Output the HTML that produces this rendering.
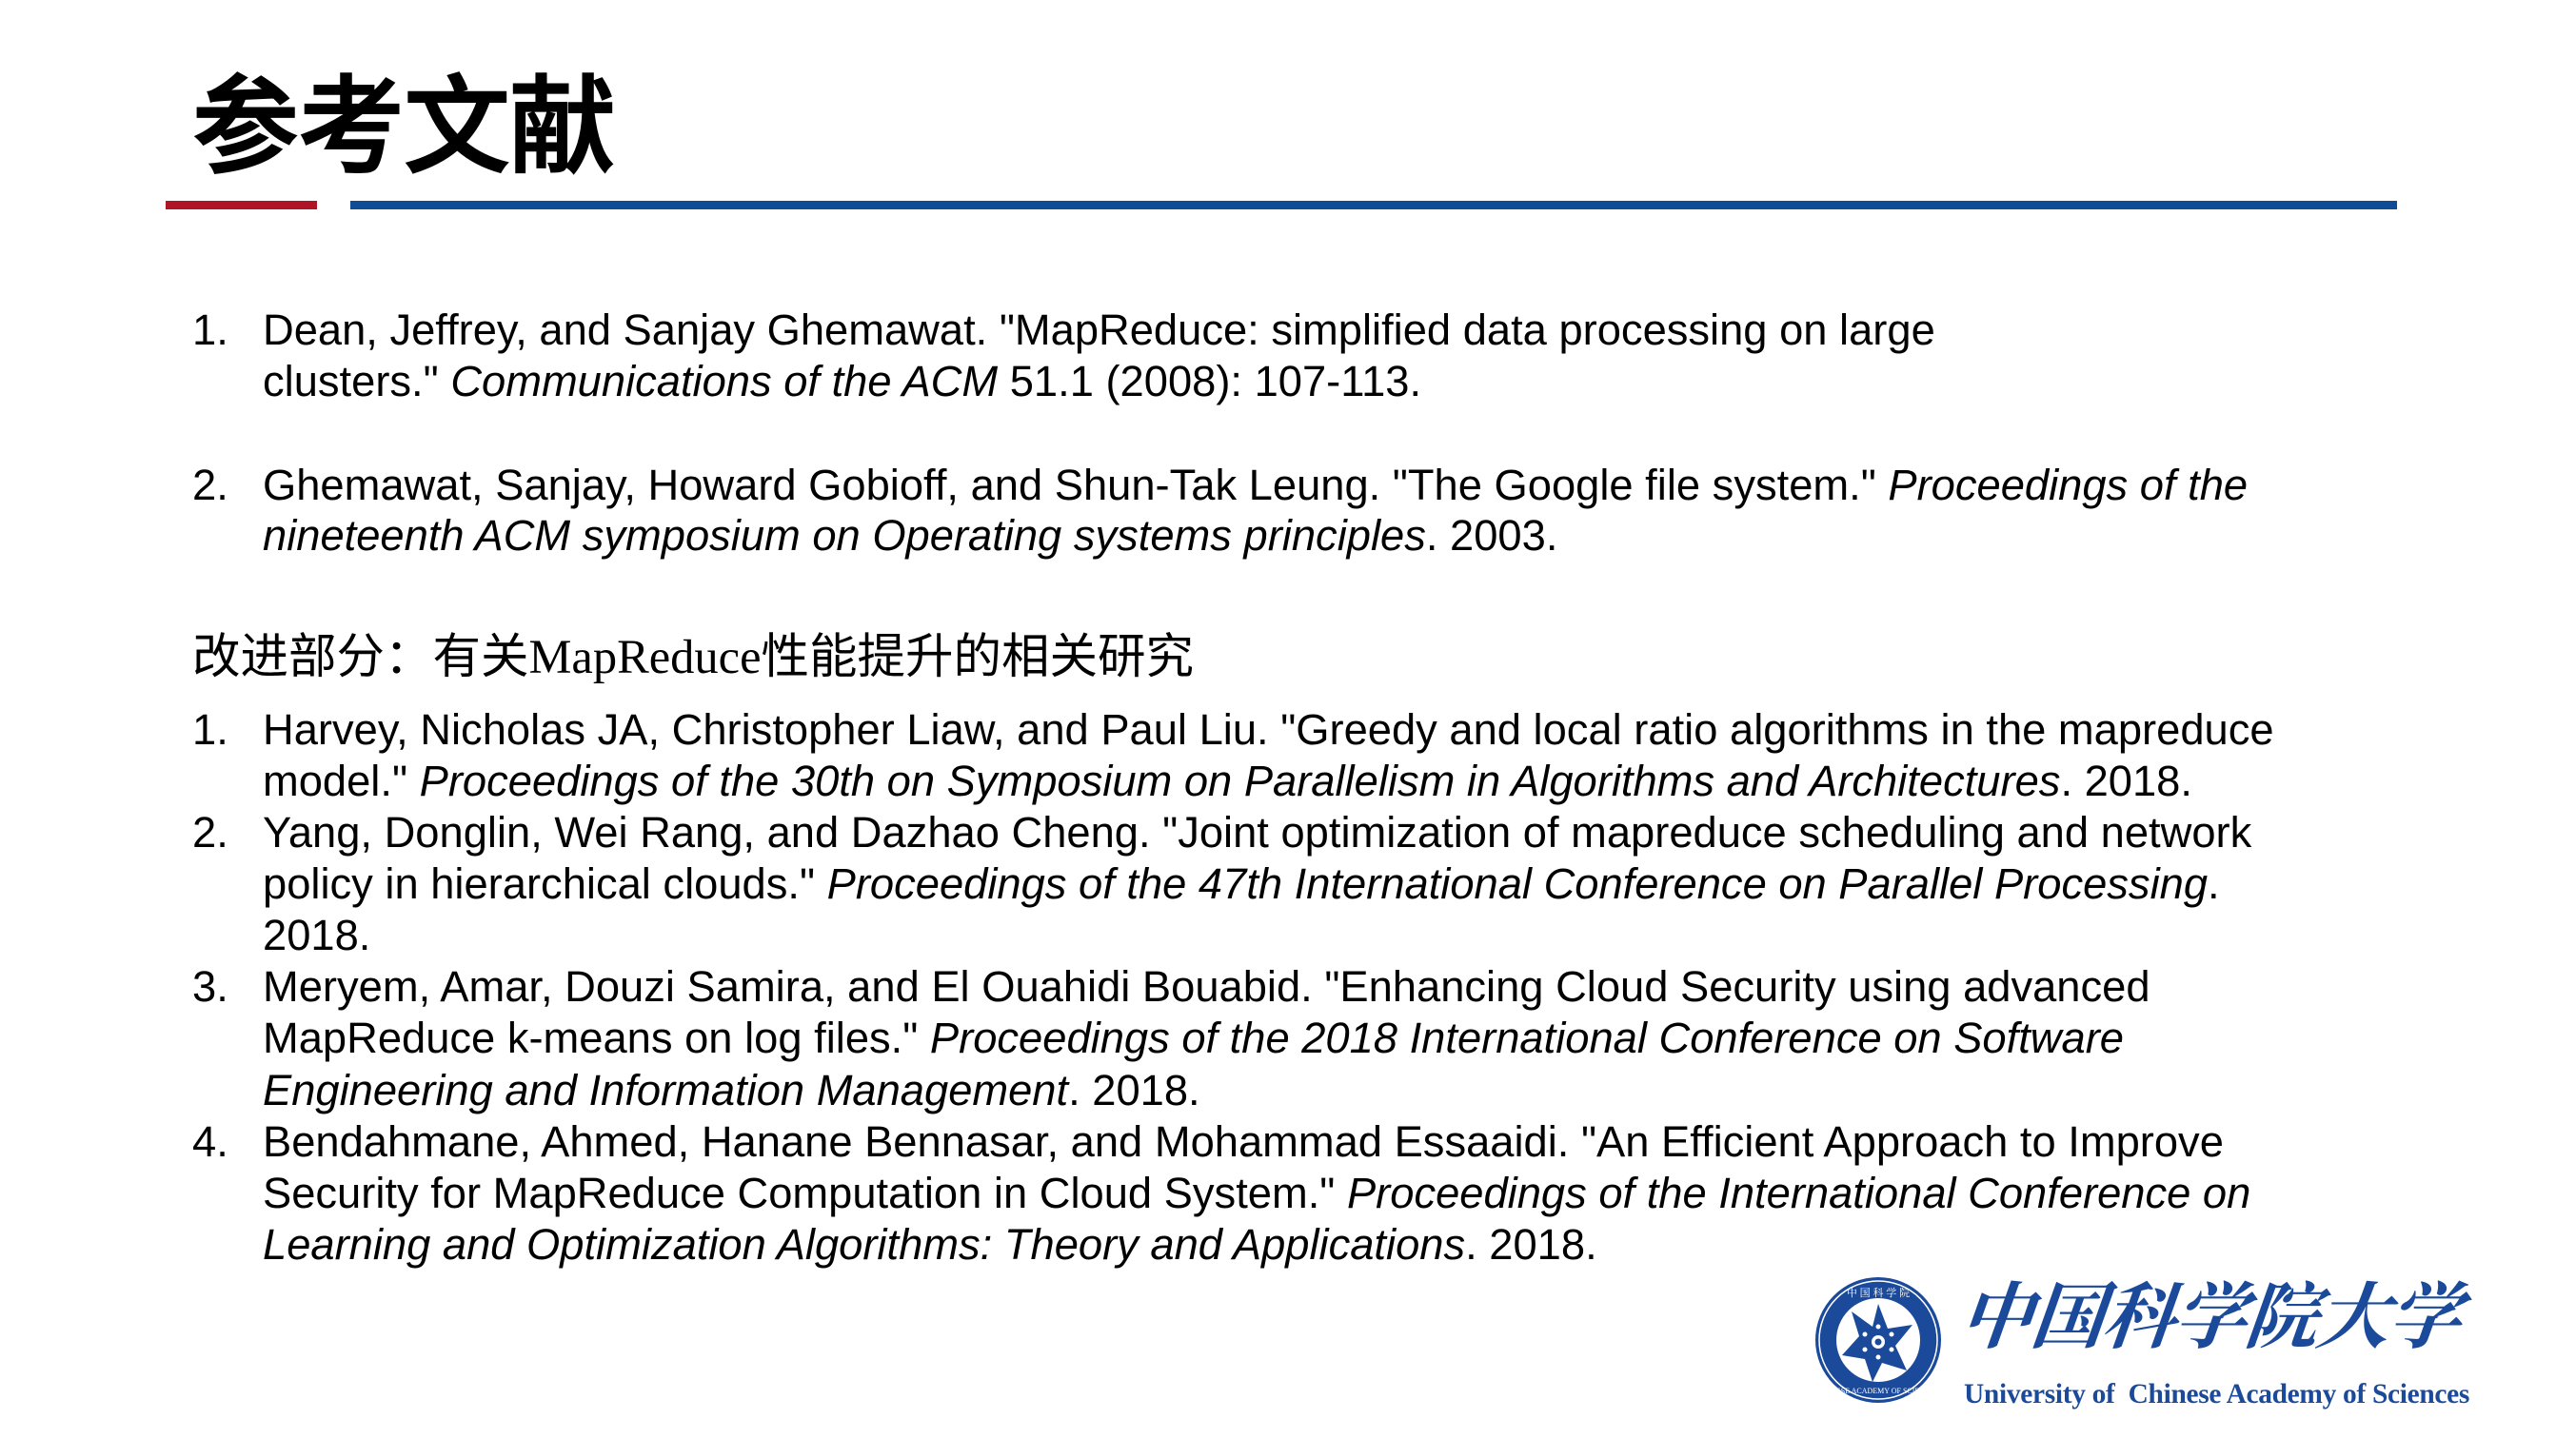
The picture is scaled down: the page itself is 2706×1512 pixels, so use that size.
<!DOCTYPE html>
<html><head><meta charset="utf-8"><style>
html,body{margin:0;padding:0;background:#fff}
body{width:2706px;height:1512px;position:relative;overflow:hidden;font-family:"Liberation Sans","Noto Sans CJK SC",sans-serif;color:#000}
.t{position:absolute;white-space:nowrap;font-size:45.3px;line-height:1}
.n{position:absolute;left:202px;font-size:45.3px;line-height:1}
i{font-style:italic}
</style></head><body>
<div style="position:absolute;left:202px;top:57px;font-size:112px;font-weight:500;font-family:'Noto Sans CJK SC',sans-serif;line-height:1.2;letter-spacing:-1px;-webkit-text-stroke:2px #000">参考文献</div>
<div style="position:absolute;left:174px;top:211px;width:159px;height:9px;background:#b01527"></div>
<div style="position:absolute;left:368px;top:211px;width:2150px;height:9px;background:#0f4b96"></div>

<div class="n" style="top:324px">1.</div>
<div class="t" style="left:276px;top:324px">Dean, Jeffrey, and Sanjay Ghemawat. "MapReduce: simplified data processing on large</div>
<div class="t" style="left:276px;top:378px">clusters." <i>Communications of the ACM</i> 51.1 (2008): 107-113.</div>

<div class="n" style="top:487px">2.</div>
<div class="t" style="left:276px;top:487px">Ghemawat, Sanjay, Howard Gobioff, and Shun-Tak Leung. "The Google file system." <i>Proceedings of the</i></div>
<div class="t" style="left:276px;top:540px"><i>nineteenth ACM symposium on Operating systems principles</i>. 2003.</div>

<div class="t" style="left:202px;top:660px;font-size:50.5px;font-family:'Liberation Serif','Noto Sans CJK SC',sans-serif"><span style="font-family:'Noto Sans CJK SC',sans-serif">改进部分：有关</span>MapReduce<span style="font-family:'Noto Sans CJK SC',sans-serif">性能提升的相关研究</span></div>

<div class="n" style="top:744px">1.</div>
<div class="t" style="left:276px;top:744px">Harvey, Nicholas JA, Christopher Liaw, and Paul Liu. "Greedy and local ratio algorithms in the mapreduce</div>
<div class="t" style="left:276px;top:798px">model." <i>Proceedings of the 30th on Symposium on Parallelism in Algorithms and Architectures</i>. 2018.</div>

<div class="n" style="top:852px">2.</div>
<div class="t" style="left:276px;top:852px">Yang, Donglin, Wei Rang, and Dazhao Cheng. "Joint optimization of mapreduce scheduling and network</div>
<div class="t" style="left:276px;top:906px">policy in hierarchical clouds." <i>Proceedings of the 47th International Conference on Parallel Processing</i>.</div>
<div class="t" style="left:276px;top:960px">2018.</div>

<div class="n" style="top:1014px">3.</div>
<div class="t" style="left:276px;top:1014px">Meryem, Amar, Douzi Samira, and El Ouahidi Bouabid. "Enhancing Cloud Security using advanced</div>
<div class="t" style="left:276px;top:1068px">MapReduce k-means on log files." <i>Proceedings of the 2018 International Conference on Software</i></div>
<div class="t" style="left:276px;top:1123px"><i>Engineering and Information Management</i>. 2018.</div>

<div class="n" style="top:1177px">4.</div>
<div class="t" style="left:276px;top:1177px">Bendahmane, Ahmed, Hanane Bennasar, and Mohammad Essaaidi. "An Efficient Approach to Improve</div>
<div class="t" style="left:276px;top:1231px">Security for MapReduce Computation in Cloud System." <i>Proceedings of the International Conference on</i></div>
<div class="t" style="left:276px;top:1285px"><i>Learning and Optimization Algorithms: Theory and Applications</i>. 2018.</div>

<svg style="position:absolute;left:1905px;top:1340px" width="136" height="136" viewBox="0 0 136 136">
<circle cx="68" cy="68" r="66" fill="#1b4a9b"/>
<circle cx="68" cy="68" r="62" fill="none" stroke="#fff" stroke-width="1.5"/>
<circle cx="68" cy="68" r="44" fill="#fff"/>
<g fill="#1b4a9b" transform="translate(68,70)">
<path d="M0,-40 L10,-14 L36,-18 L18,4 L30,30 L4,22 L-6,42 L-14,18 L-38,14 L-20,-6 L-28,-32 L-6,-16 Z"/>
</g>
<circle cx="68" cy="70" r="7" fill="#fff"/>
<circle cx="68" cy="70" r="3.5" fill="#1b4a9b"/>
<g fill="#fff"><circle cx="68" cy="54" r="2.5"/><circle cx="82" cy="62" r="2.5"/><circle cx="82" cy="78" r="2.5"/><circle cx="68" cy="86" r="2.5"/><circle cx="54" cy="78" r="2.5"/><circle cx="54" cy="62" r="2.5"/></g>
<text x="68" y="22" text-anchor="middle" fill="#fff" font-size="11" font-family="Noto Serif CJK SC,serif">中 国 科 学 院</text>
<text x="68" y="124" text-anchor="middle" fill="#fff" font-size="8" font-family="Liberation Serif,serif">CHINESE ACADEMY OF SCIENCES</text>
</svg>
<div style="position:absolute;left:2060px;top:1332px;font-size:76px;line-height:1.2;color:#1b4a9b;font-weight:bold;font-family:'Noto Serif CJK SC',serif;font-style:italic;letter-spacing:-1px;transform:skewX(-6deg)">中国科学院大学</div>
<div style="position:absolute;left:2063px;top:1451px;font-size:29.4px;line-height:1;color:#1b4a9b;font-weight:bold;font-family:'Liberation Serif',serif;white-space:nowrap;letter-spacing:-0.3px">University of&nbsp; Chinese Academy of Sciences</div>
</body></html>
